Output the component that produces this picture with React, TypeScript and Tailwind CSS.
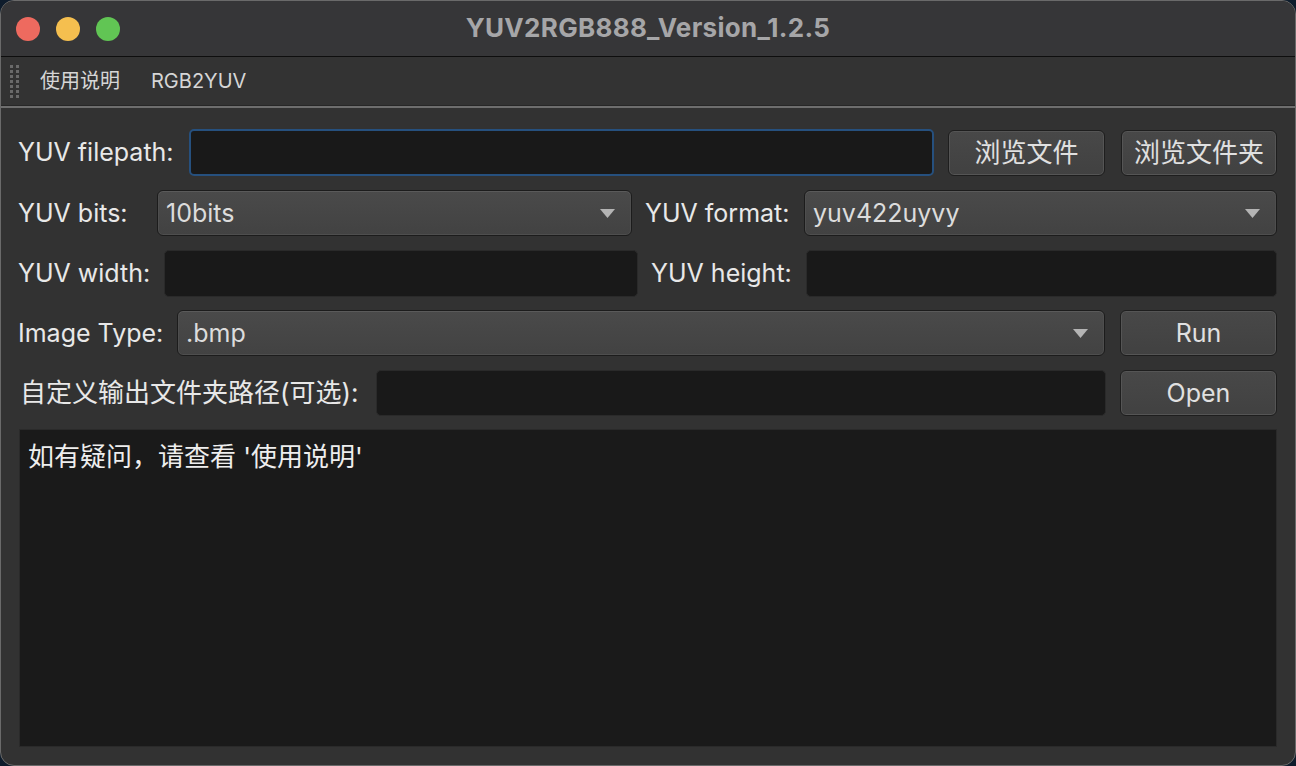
import React from "react";

const FONT = { fontFamily: 'Inter, "Noto Sans CJK SC", "Liberation Sans", sans-serif' };

function Arrow() {
  return (
    <svg width="15" height="9" viewBox="0 0 15 9" className="shrink-0">
      <polygon points="0,0 15,0 7.5,9" fill="#b4b4b4" />
    </svg>
  );
}

function Combo({ value, className }: { value: string; className: string }) {
  return (
    <div
      className={`h-[46px] flex items-center justify-between pl-[8px] pr-[16px] rounded-[6px] border border-[#1c1c1c] bg-gradient-to-b from-[#4a4a4a] to-[#424242] shadow-[inset_0_1px_0_#5a5a5a,inset_0_0_0_1px_#4e4e4e] text-[#dcdcdc] ${className}`}
    >
      <span className="text-[25px] leading-none">{value}</span>
      <Arrow />
    </div>
  );
}

function Input({ className, focus }: { className: string; focus?: boolean }) {
  return (
    <div
      className={`h-[46px] rounded-[5px] bg-[#191919] ${
        focus ? "border-2 border-[#26507e]" : "border border-[#2a2a2a]"
      } ${className}`}
    />
  );
}

function Button({ label, className }: { label: string; className: string }) {
  return (
    <div
      className={`h-[46px] flex items-center justify-center rounded-[6px] border border-[#1e1e1e] bg-gradient-to-b from-[#484848] to-[#414141] shadow-[inset_0_0_0_1px_#555555] text-[25px] leading-none text-[#e0e0e0] ${className}`}
    >
      {label}
    </div>
  );
}

function Label({ text, className }: { text: string; className?: string }) {
  return (
    <span className={`text-[25px] leading-none text-[#e8e8e8] whitespace-nowrap shrink-0 ${className ?? ""}`}>
      {text}
    </span>
  );
}

export default function App() {
  return (
    <div className="w-[1296px] h-[766px] bg-[#0e1c2c] overflow-hidden" style={FONT}>
      <div className="w-[1296px] h-[766px] rounded-[14px] border border-[#6a6a6a] bg-[#323232] overflow-hidden flex flex-col">
        {/* title bar */}
        <div className="h-[56px] shrink-0 bg-[#363638] flex items-center relative border-b border-[#0e0e0e]">
          <div className="flex items-center gap-[16px] pl-[15px]">
            <div className="w-[24px] h-[24px] rounded-full bg-[#ee6a5f]" />
            <div className="w-[24px] h-[24px] rounded-full bg-[#f5bf4f]" />
            <div className="w-[24px] h-[24px] rounded-full bg-[#61c554]" />
          </div>
          <div className="absolute inset-0 flex items-center justify-center pointer-events-none pb-[2px]">
            <span className="text-[26px] font-bold text-[#a6a6a8] leading-none tracking-[0.3px]">
              YUV2RGB888_Version_1.2.5
            </span>
          </div>
        </div>
        {/* toolbar */}
        <div className="h-[49px] shrink-0 bg-[#333333] flex items-center border-b border-[#272727]">
          <div className="ml-[9px] grid grid-cols-2 gap-x-[3px] gap-y-[2px]">
            {Array.from({ length: 14 }).map((_, i) => (
              <div key={i} className="w-[3px] h-[3px] bg-[#6a6a6a]" />
            ))}
          </div>
          <span className="ml-[21px] text-[20px] leading-none text-[#d6d6d6]">使用说明</span>
          <span className="ml-[31px] text-[20px] leading-none text-[#d6d6d6]">RGB2YUV</span>
        </div>
        <div className="h-[2px] shrink-0 bg-[#6e6e6e]" />
        {/* content */}
        <div className="flex-1 flex flex-col pl-[17px] pr-[18px] pt-[21px] pb-[18px]">
          <div className="flex items-center h-[47px]">
            <Label text="YUV filepath:" className="w-[171px]" />
            <Input focus className="w-[745px] h-[47px]" />
            <Button label="浏览文件" className="ml-[14px] w-[157px] text-[26px]" />
            <Button label="浏览文件夹" className="ml-[16px] flex-1 text-[26px]" />
          </div>
          <div className="flex items-center h-[46px] mt-[14px]">
            <Label text="YUV bits:" className="w-[139px]" />
            <Combo value="10bits" className="w-[475px]" />
            <Label text="YUV format:" className="ml-[13px] w-[159px]" />
            <Combo value="yuv422uyvy" className="flex-1" />
          </div>
          <div className="flex items-center h-[47px] mt-[14px]">
            <Label text="YUV width:" className="w-[146px]" />
            <Input className="w-[474px] h-[47px]" />
            <Label text="YUV height:" className="ml-[13px] w-[155px]" />
            <Input className="flex-1 h-[47px]" />
          </div>
          <div className="flex items-center h-[46px] mt-[13px]">
            <Label text="Image Type:" className="w-[159px]" />
            <Combo value=".bmp" className="w-[928px]" />
            <Button label="Run" className="ml-[15px] flex-1" />
          </div>
          <div className="flex items-center h-[46px] mt-[14px]">
            <span className="text-[26px] leading-none text-[#e8e8e8] whitespace-nowrap shrink-0 w-[358px] pl-[2px]">
              自定义输出文件夹路径(可选):
            </span>
            <Input className="w-[730px] h-[46px]" />
            <Button label="Open" className="ml-[14px] flex-1" />
          </div>
          <div className="mt-[13px] flex-1 bg-[#1a1a1a] border border-[#2a2a2a] pl-[8px] pt-[12px] ml-[1px]">
            <div className="text-[26px] leading-[30px] text-[#eeeeee]">如有疑问，请查看 '使用说明'</div>
          </div>
        </div>
      </div>
    </div>
  );
}
